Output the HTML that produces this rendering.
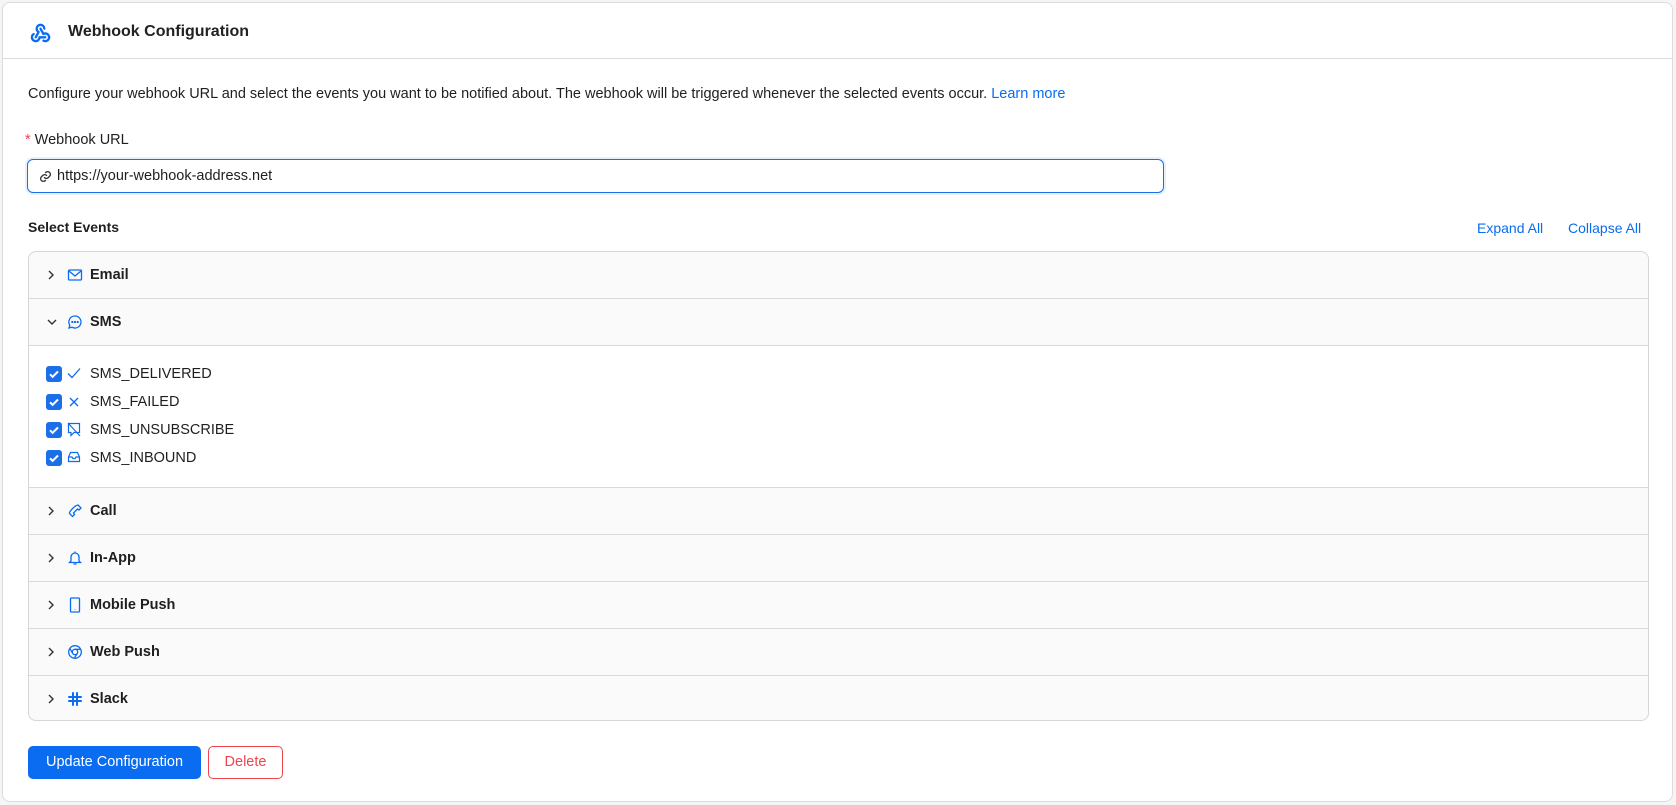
<!DOCTYPE html>
<html><head><meta charset="utf-8"><style>
*{box-sizing:border-box;margin:0;padding:0}
body{width:1676px;height:805px;background:#f5f5f5;font-family:"Liberation Sans",sans-serif;color:#1f1f1f;font-size:14.5px;overflow:hidden}
.card{position:absolute;left:2px;top:2px;width:1671px;height:800px;background:#fff;border:1px solid #dcdcdc;border-radius:8px}
.hdr{height:56px;border-bottom:1px solid #dcdcdc;position:relative}
.hdr .t{position:absolute;left:65px;top:20px;font-size:16px;font-weight:bold;color:#222}
.hdr svg{position:absolute;left:26px;top:18px}
.abs{position:absolute}
.blue{color:#0a6cf0}
.input{position:absolute;left:24px;top:156px;width:1137px;height:34px;border:1.5px solid #1b6fe8;border-radius:6px;box-shadow:0 0 0 2px #e6f0fd}
.acc{position:absolute;left:25px;top:248px;width:1621px;height:470px;border:1px solid #d6d6d6;border-radius:8px;background:#fafafa;overflow:hidden}
.row{position:absolute;left:0;width:100%;height:47px;border-bottom:1px solid #d9d9d9}
.row .ch{position:absolute;left:17px;top:17px}
.row .ic{position:absolute;left:38px;top:15px}
.row .lb{position:absolute;left:61px;top:15px;font-weight:bold;font-size:14.5px}
.panel{position:absolute;left:0;top:94px;width:100%;height:142px;background:#fff;border-bottom:1px solid #d9d9d9}
.cb{position:absolute;left:17px;width:16px;height:16px;background:#1b6fe8;border-radius:3px}
.ev{position:absolute;left:61px;font-size:14.5px}
.evi{position:absolute;left:38px}
.btn1{position:absolute;left:25px;top:743px;width:173px;height:33px;background:#0a6cf0;color:#fff;border-radius:5px;font-size:14.5px;text-align:center;line-height:33px}
.btn2{position:absolute;left:205px;top:743px;width:75px;height:33px;border:1px solid #f0454d;color:#f0454d;border-radius:5px;font-size:14.5px;text-align:center;line-height:31px}
</style></head><body>
<div class="card">
<div class="hdr">
<svg width="23" height="23" viewBox="0 0 24 24" fill="none" stroke="#0a6cf0" stroke-width="2.4" stroke-linecap="round" stroke-linejoin="round"><path d="M4.876 13.61a4 4 0 1 0 6.124 3.39h6"/><path d="M15.066 20.502a4 4 0 1 0 1.934 -7.502c-.706 0 -1.424 .179 -2 .5l-3 -5.5"/><path d="M16 8a4 4 0 1 0 -8 0c0 1.506 .77 2.818 2 3.5l-3 5.5"/></svg>
<div class="t">Webhook Configuration</div>
</div>
<div class="abs" style="left:25px;top:83px">Configure your webhook URL and select the events you want to be notified about. The webhook will be triggered whenever the selected events occur. <span class="blue">Learn more</span></div>
<div class="abs" style="left:22px;top:129px"><span style="color:#f0454d">*</span> Webhook URL</div>
<div class="input">
<svg style="position:absolute;left:11px;top:10px" width="13" height="13" viewBox="0 0 24 24" fill="none" stroke="#333" stroke-width="2.5" stroke-linecap="round"><path d="M10 14a5 5 0 0 0 7 0l3-3a5 5 0 0 0-7-7l-1 1"/><path d="M14 10a5 5 0 0 0-7 0l-3 3a5 5 0 0 0 7 7l1-1"/></svg>
<div class="abs" style="left:29px;top:8px">https://your-webhook-address.net</div>
</div>
<div class="abs" style="left:25px;top:216px;font-weight:bold;font-size:14px">Select Events</div>
<div class="abs blue" style="left:1474px;top:217px;font-size:14px">Expand All</div>
<div class="abs blue" style="left:1565px;top:217px;font-size:14px">Collapse All</div>
<div class="acc">
<div class="row" style="top:0"><svg class="ch" width="10" height="12" viewBox="0 0 10 12"><path d="M3 2l4 4-4 4" fill="none" stroke="#333" stroke-width="1.4"/></svg>
<svg class="ic" width="16" height="16" viewBox="0 0 16 16" fill="none" stroke="#0a6cf0" stroke-width="1.3"><rect x="1.5" y="3" width="13" height="10" rx="1"/><path d="M2 4l6 5 6-5"/></svg><div class="lb">Email</div></div>
<div class="row" style="top:47px"><svg class="ch" width="12" height="12" viewBox="0 0 12 12"><path d="M2 4l4 4 4-4" fill="none" stroke="#333" stroke-width="1.4"/></svg>
<svg class="ic" width="16" height="16" viewBox="0 0 16 16" fill="none" stroke="#0a6cf0" stroke-width="1.3"><path d="M8 2a6 6 0 1 1-3 11.2L2 14l.8-2.8A6 6 0 0 1 8 2z"/><circle cx="5.3" cy="8" r=".5" fill="#0a6cf0"/><circle cx="8" cy="8" r=".5" fill="#0a6cf0"/><circle cx="10.7" cy="8" r=".5" fill="#0a6cf0"/></svg><div class="lb">SMS</div></div>
<div class="panel">
<div class="cb" style="top:20px"><svg width="16" height="16" viewBox="0 0 16 16"><path d="M4 8.3l2.6 2.5L12 5.5" fill="none" stroke="#fff" stroke-width="2"/></svg></div>
<svg class="evi" style="top:20px" width="14" height="14" viewBox="0 0 14 14"><path d="M1 7.5l4 4L13 2.5" fill="none" stroke="#0a6cf0" stroke-width="1.3"/></svg><div class="ev" style="top:20px">SMS_DELIVERED</div>
<div class="cb" style="top:48px"><svg width="16" height="16" viewBox="0 0 16 16"><path d="M4 8.3l2.6 2.5L12 5.5" fill="none" stroke="#fff" stroke-width="2"/></svg></div>
<svg class="evi" style="top:49px" width="14" height="14" viewBox="0 0 14 14"><path d="M3 3l8 8M11 3l-8 8" fill="none" stroke="#0a6cf0" stroke-width="1.3"/></svg><div class="ev" style="top:48px">SMS_FAILED</div>
<div class="cb" style="top:76px"><svg width="16" height="16" viewBox="0 0 16 16"><path d="M4 8.3l2.6 2.5L12 5.5" fill="none" stroke="#fff" stroke-width="2"/></svg></div>
<svg class="evi" style="top:76px" width="14" height="15" viewBox="0 0 14 15"><path d="M1.5 1.5h11v9H7l-3 3v-3H1.5z M1 1l12 13" fill="none" stroke="#0a6cf0" stroke-width="1.2"/></svg><div class="ev" style="top:76px">SMS_UNSUBSCRIBE</div>
<div class="cb" style="top:104px"><svg width="16" height="16" viewBox="0 0 16 16"><path d="M4 8.3l2.6 2.5L12 5.5" fill="none" stroke="#fff" stroke-width="2"/></svg></div>
<svg class="evi" style="top:104px" width="14" height="14" viewBox="0 0 14 14"><path d="M1.5 7l2-4.5h7l2 4.5v4.5h-11zM1.5 7H5l1 1.5h2L9 7h3.5" fill="none" stroke="#0a6cf0" stroke-width="1.2"/></svg><div class="ev" style="top:104px">SMS_INBOUND</div>
</div>
<div class="row" style="top:236px"><svg class="ch" width="10" height="12" viewBox="0 0 10 12"><path d="M3 2l4 4-4 4" fill="none" stroke="#333" stroke-width="1.4"/></svg>
<svg class="ic" width="16" height="16" viewBox="0 0 16 16" fill="none" stroke="#0a6cf0" stroke-width="1.3"><path d="M11 2l3 3-2 2-1.5-1-4 4 1 1.5-2 2-3-3C2 9 7 3 11 2z"/></svg><div class="lb">Call</div></div>
<div class="row" style="top:283px"><svg class="ch" width="10" height="12" viewBox="0 0 10 12"><path d="M3 2l4 4-4 4" fill="none" stroke="#333" stroke-width="1.4"/></svg>
<svg class="ic" width="16" height="16" viewBox="0 0 16 16" fill="none" stroke="#0a6cf0" stroke-width="1.3"><path d="M4 11V7a4 4 0 0 1 8 0v4l1.5 1.5h-11zM8 1.5V3M6.5 14h3"/></svg><div class="lb">In-App</div></div>
<div class="row" style="top:330px"><svg class="ch" width="10" height="12" viewBox="0 0 10 12"><path d="M3 2l4 4-4 4" fill="none" stroke="#333" stroke-width="1.4"/></svg>
<svg class="ic" width="16" height="16" viewBox="0 0 16 16" fill="none" stroke="#0a6cf0" stroke-width="1.3"><rect x="3.5" y="1" width="9" height="14" rx="1"/><path d="M8 12.5v.5"/></svg><div class="lb">Mobile Push</div></div>
<div class="row" style="top:377px"><svg class="ch" width="10" height="12" viewBox="0 0 10 12"><path d="M3 2l4 4-4 4" fill="none" stroke="#333" stroke-width="1.4"/></svg>
<svg class="ic" width="16" height="16" viewBox="0 0 16 16" fill="none" stroke="#0a6cf0" stroke-width="1.3"><circle cx="8" cy="8" r="6.3"/><circle cx="8" cy="8" r="2.7"/><path d="M8 5.3h6M5.7 9.4L2.8 4.3M10.3 9.4L7.3 14.3"/></svg><div class="lb">Web Push</div></div>
<div class="row" style="top:424px;border-bottom:none"><svg class="ch" width="10" height="12" viewBox="0 0 10 12"><path d="M3 2l4 4-4 4" fill="none" stroke="#333" stroke-width="1.4"/></svg>
<svg class="ic" width="16" height="16" viewBox="0 0 16 16" fill="none" stroke="#0a6cf0" stroke-width="2" stroke-linecap="round"><path d="M6 2v12M10 2v12M2 6h12M2 10h12"/></svg><div class="lb">Slack</div></div>
</div>
<div class="btn1">Update Configuration</div>
<div class="btn2">Delete</div>
</div>
</body></html>
